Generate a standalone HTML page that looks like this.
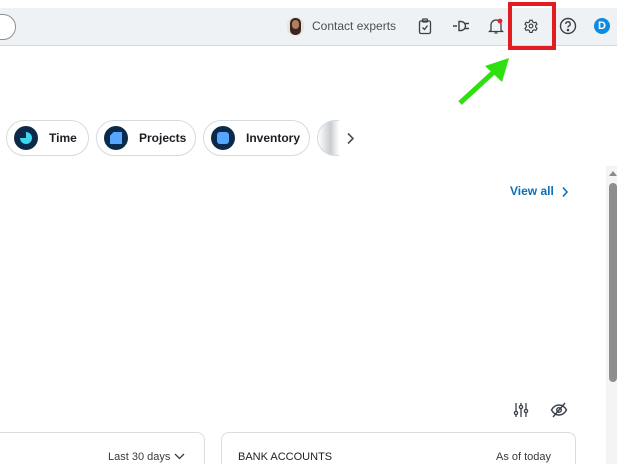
<!DOCTYPE html>
<html><head><meta charset="utf-8"><style>
*{margin:0;padding:0;box-sizing:border-box}
html,body{width:617px;height:464px;overflow:hidden}
body{background:#fff;font-family:"Liberation Sans",sans-serif;position:relative}
.abs{position:absolute}
.top{left:0;top:8px;width:617px;height:38px;background:#eff2f5;border-bottom:1px solid #d6dadf}
.pill{height:36px;border:1px solid #d4dbe1;border-radius:18px;background:#fff;display:flex;align-items:center;font-size:12px;font-weight:bold;color:#1b1f24}
.ic{width:24px;height:24px;border-radius:50%;background:#0b2a4a;margin-left:7px;margin-right:11px;position:relative;flex:none}
</style></head><body>
<div class="abs top"></div>
<div class="abs" style="left:-20px;top:14px;width:36px;height:26px;border:1px solid #8a9097;border-radius:13px;background:#fff"></div>
<div class="abs" style="left:287px;top:17px;width:17px;height:19px;border-radius:8px;background:#e9e3de;overflow:hidden">
<div style="position:absolute;left:3px;top:1px;width:11px;height:17px;border-radius:5px;background:#3a2620"></div>
<div style="position:absolute;left:5px;top:3px;width:7px;height:9px;border-radius:4px;background:#b57e62"></div>
</div>
<div class="abs" style="left:312px;top:19px;font-size:12px;color:#4a5058">Contact experts</div>
<svg class="abs" style="left:418px;top:18px" width="14" height="17" viewBox="0 0 14 17" fill="none" stroke="#3b4048" stroke-width="1.3"><rect x="1.5" y="3" width="11" height="12.5" rx="1.5"/><rect x="4.5" y="1" width="5" height="3" rx="1"/><path d="M4.5 9.5l2 2 3-4"/></svg>
<svg class="abs" style="left:452px;top:19px" width="18" height="14" viewBox="0 0 18 14" fill="none" stroke="#3b4048" stroke-width="1.4"><path d="M1 7h4M9 2.5H7v9h2a4 4 0 0 0 0-9zM13 4.5h4M13 9.5h4"/></svg>
<svg class="abs" style="left:488px;top:17px" width="16" height="18" viewBox="0 0 16 18" fill="none" stroke="#3b4048" stroke-width="1.3"><path d="M3 13V8a5 5 0 0 1 10 0v5l1.5 1.5h-13zM6.5 16h3"/><circle cx="12" cy="4" r="2.4" fill="#e0262a" stroke="none"/></svg>
<div class="abs" style="left:508px;top:2px;width:48px;height:48px;border:4px solid #e31c22"></div>
<svg class="abs" style="left:524px;top:19px" width="14" height="14" viewBox="0 0 24 24" fill="none" stroke="#3b4048" stroke-width="2"><circle cx="12" cy="12" r="3.2"/><path d="M10 2h4l.7 3 2.6 1.5 3-1 2 3.5-2.3 2v3l2.3 2-2 3.5-3-1-2.6 1.5-.7 3h-4l-.7-3-2.6-1.5-3 1-2-3.5 2.3-2v-3l-2.3-2 2-3.5 3 1L9.3 5z"/></svg>
<svg class="abs" style="left:559px;top:17px" width="18" height="18" viewBox="0 0 18 18" fill="none" stroke="#3b4048" stroke-width="1.4"><circle cx="9" cy="9" r="7.5"/><path d="M6.8 7a2.2 2.2 0 1 1 3 2c-.6.3-.8.7-.8 1.5"/><circle cx="9" cy="13" r=".6" fill="#3b4048"/></svg>
<div class="abs" style="left:594px;top:18px;width:16px;height:16px;border-radius:50%;background:#0e8ae0;color:#fff;font-size:11px;font-weight:bold;text-align:center;line-height:16px">D</div>
<svg class="abs" style="left:455px;top:55px" width="60" height="52" viewBox="0 0 60 52"><path d="M5 48L42 14" stroke="#2ee00f" stroke-width="5"/><path d="M54 3L30 11 47 27z" fill="#2ee00f"/></svg>
<div class="abs pill" style="left:6px;top:120px;width:83px"><div class="ic"><svg width="24" height="24" style="position:absolute"><path d="M12 6a6 6 0 1 1-6 6h6z" fill="#3cd6ef"/></svg></div>Time</div>
<div class="abs pill" style="left:96px;top:120px;width:100px"><div class="ic"><div style="position:absolute;left:6px;top:6px;width:12px;height:12px;background:#55a6ff;clip-path:polygon(30% 0,100% 0,100% 100%,0 100%,0 30%)"></div></div>Projects</div>
<div class="abs pill" style="left:203px;top:120px;width:107px"><div class="ic"><div style="position:absolute;left:6px;top:6px;width:12px;height:12px;background:#55a6ff;border-radius:3px"></div></div>Inventory</div>
<div class="abs" style="left:317px;top:120px;width:22px;height:36px;border:1px solid #d4dbe1;border-right:none;border-radius:18px 0 0 18px;background:linear-gradient(90deg,#fff,#c9ccd0 60%,#fff)"></div>
<svg class="abs" style="left:346px;top:132px" width="9" height="13" viewBox="0 0 9 13" fill="none" stroke="#4a5058" stroke-width="1.6"><path d="M2 1.5l5 5-5 5"/></svg>
<div class="abs" style="left:510px;top:184px;font-size:12px;font-weight:bold;color:#0d6fb8">View all</div>
<svg class="abs" style="left:561px;top:186px" width="8" height="12" viewBox="0 0 8 12" fill="none" stroke="#0d6fb8" stroke-width="1.6"><path d="M2 1.5l4 4.5-4 4.5"/></svg>
<div class="abs" style="left:606px;top:166px;width:11px;height:298px;background:#f4f4f4"></div>
<div class="abs" style="left:609px;top:171px;width:0;height:0;border-left:4px solid transparent;border-right:4px solid transparent;border-bottom:5px solid #8a8a8a"></div>
<div class="abs" style="left:609px;top:183px;width:8px;height:199px;background:#8e8e8e;border-radius:4px"></div>
<svg class="abs" style="left:513px;top:402px" width="16" height="16" viewBox="0 0 16 16" fill="none" stroke="#3b4048" stroke-width="1.3"><path d="M3 1v14M8 1v14M13 1v14"/><circle cx="3" cy="11" r="1.6" fill="#fff"/><circle cx="8" cy="5" r="1.6" fill="#fff"/><circle cx="13" cy="9" r="1.6" fill="#fff"/></svg>
<svg class="abs" style="left:550px;top:402px" width="18" height="16" viewBox="0 0 18 16" fill="none" stroke="#3b4048" stroke-width="1.4"><path d="M1.5 8c2-3.5 4.5-5 7.5-5s5.5 1.5 7.5 5c-2 3.5-4.5 5-7.5 5S3.5 11.5 1.5 8z"/><circle cx="9" cy="8" r="2.3"/><path d="M3 15L15 1"/></svg>
<div class="abs" style="left:-20px;top:432px;width:225px;height:32px;border:1px solid #d8dde2;border-bottom:none;border-radius:8px 8px 0 0"></div>
<div class="abs" style="left:108px;top:451px;font-size:11px;color:#393a3d">Last 30 days</div>
<svg class="abs" style="left:174px;top:453px" width="11" height="7" viewBox="0 0 11 7" fill="none" stroke="#393a3d" stroke-width="1.3"><path d="M1 1l4.5 4.5L10 1"/></svg>
<div class="abs" style="left:221px;top:432px;width:355px;height:32px;border:1px solid #d8dde2;border-bottom:none;border-radius:8px 8px 0 0"></div>
<div class="abs" style="left:238px;top:451px;font-size:11px;color:#1b1f24">BANK ACCOUNTS</div>
<div class="abs" style="left:496px;top:451px;font-size:11px;color:#393a3d">As of today</div>
</body></html>
